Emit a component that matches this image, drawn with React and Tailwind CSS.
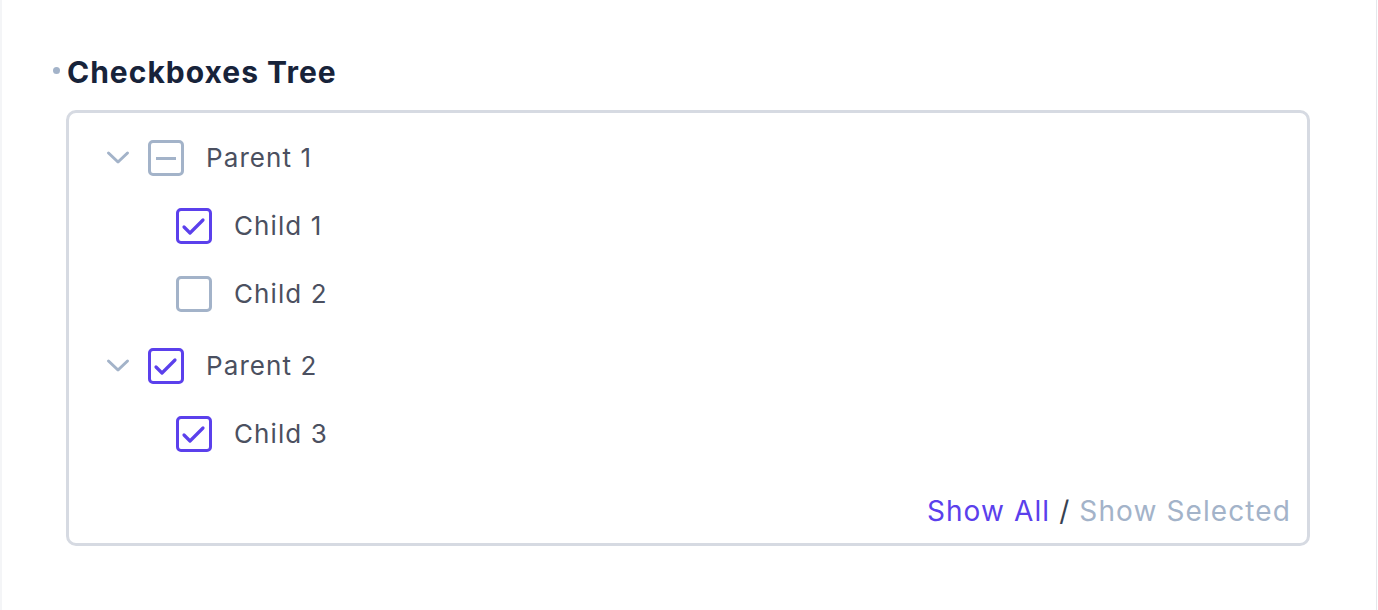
import React from "react";

const Chevron = () => (
  <svg width="24" height="16" viewBox="0 0 24 16" fill="none" className="shrink-0">
    <polyline points="2.5,3 12,12 21.5,3" stroke="#a3b3c9" strokeWidth="3" strokeLinecap="round" strokeLinejoin="round" />
  </svg>
);

const Box = ({ state }) => {
  if (state === "checked") {
    return (
      <div className="w-[36px] h-[36px] shrink-0 rounded-[5px] border-[3px] border-[#5b40ec] flex items-center justify-center">
        <svg width="30" height="30" viewBox="0 0 30 30" fill="none">
          <polyline points="5,16 11,22 24,9" stroke="#5b40ec" strokeWidth="3.2" strokeLinecap="round" strokeLinejoin="round" />
        </svg>
      </div>
    );
  }
  if (state === "indeterminate") {
    return (
      <div className="w-[36px] h-[36px] shrink-0 rounded-[5px] border-[3px] border-[#a3b3c9] flex items-center justify-center">
        <div className="w-[20px] h-[3px] bg-[#a3b3c9]" />
      </div>
    );
  }
  return <div className="w-[36px] h-[36px] shrink-0 rounded-[5px] border-[3px] border-[#a3b3c9]" />;
};

const ParentRow = ({ label, state, className = "" }) => (
  <div className={"flex items-center h-[36px] " + className}>
    <div className="w-[24px] flex justify-center">
      <Chevron />
    </div>
    <div className="ml-[18px]">
      <Box state={state} />
    </div>
    <span className="ml-[22px] text-[26px] leading-none tracking-[1.1px] text-[#4b5060]">{label}</span>
  </div>
);

const ChildRow = ({ label, state, className = "" }) => (
  <div className={"flex items-center h-[36px] pl-[70px] " + className}>
    <Box state={state} />
    <span className="ml-[22px] text-[26px] leading-none tracking-[1.1px] text-[#4b5060]">{label}</span>
  </div>
);

export default function App() {
  return (
    <div
      className="w-[1377px] h-[610px] bg-white border-l-2 border-l-[#f4f5f7] border-r border-r-[#e5e7eb] pt-[54px] pl-[64px]"
      style={{ fontFamily: "Inter, 'Noto Sans', sans-serif" }}
    >
      <div className="flex items-center h-[36px] -ml-[13px] gap-[7px]">
        <div className="w-[7px] h-[7px] rounded-full bg-[#a3b3c9] -mt-[3px]" />
        <h2 className="text-[30px] font-bold leading-none text-[#17233a] tracking-[1px]">Checkboxes Tree</h2>
      </div>
      <div className="mt-[20px] w-[1244px] h-[436px] rounded-[10px] border-[3px] border-[#d6dae2] flex flex-col pt-[27px] pl-[37px] pr-[16px] pb-[12px]">
        <div className="flex flex-col gap-[32px]">
          <ParentRow label="Parent 1" state="indeterminate" />
          <ChildRow label="Child 1" state="checked" />
          <ChildRow label="Child 2" state="unchecked" />
          <ParentRow label="Parent 2" state="checked" className="mt-[4px]" />
          <ChildRow label="Child 3" state="checked" />
        </div>
        <div className="mt-auto flex justify-end items-center h-[40px] text-[28px] leading-none tracking-[1.1px]">
          <span className="text-[#5b40ec]">Show All</span>
          <span className="text-[#374151] mx-[9px]">/</span>
          <span className="text-[#a3b3c9]">Show Selected</span>
        </div>
      </div>
    </div>
  );
}
